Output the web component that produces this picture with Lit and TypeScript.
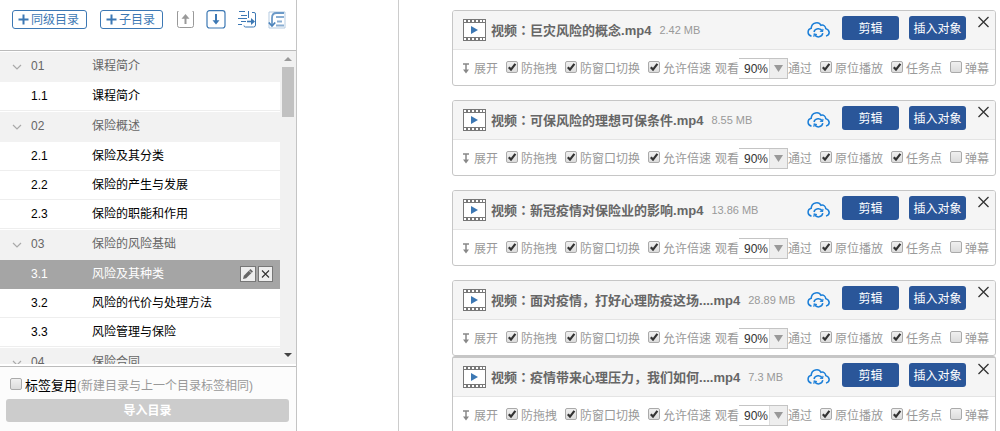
import { LitElement, html, css, svg } from "lit";
import { customElement, property } from "lit/decorators.js";

const base = css`
  *, :host { box-sizing: border-box; }
  :host { font: 12px/18px "Liberation Sans", "Noto Sans CJK SC", sans-serif; }
  button { font: inherit; padding: 0; border: 0; background: none; cursor: pointer; }
  svg { display: block; }
  label { display: flex; align-items: center; white-space: nowrap; }
  input[type="checkbox"] {
    appearance: none; flex: none; width: 12px; height: 12px; margin: 0 3px 4px 0;
    border: 1px solid #aaa; border-radius: 2px;
    background: linear-gradient(#f0f0f0, #dcdcdc);
  }
  input[type="checkbox"]:checked {
    background: url("data:image/svg+xml,%3Csvg xmlns='http://www.w3.org/2000/svg' viewBox='0 0 10 10'%3E%3Cpath d='M1.8 5.2 4 7.6 8.4 1.8' fill='none' stroke='%23333' stroke-width='2.2'/%3E%3C/svg%3E"), linear-gradient(#f0f0f0, #dcdcdc);
  }
`;

interface Entry { no: string; name: string; chapter?: boolean; active?: boolean; }

const entries: Entry[] = [
  { no: "01", name: "课程简介", chapter: true },
  { no: "1.1", name: "课程简介" },
  { no: "02", name: "保险概述", chapter: true },
  { no: "2.1", name: "保险及其分类" },
  { no: "2.2", name: "保险的产生与发展" },
  { no: "2.3", name: "保险的职能和作用" },
  { no: "03", name: "保险的风险基础", chapter: true },
  { no: "3.1", name: "风险及其种类", active: true },
  { no: "3.2", name: "风险的代价与处理方法" },
  { no: "3.3", name: "风险管理与保险" },
  { no: "04", name: "保险合同", chapter: true },
];

const videos = [
  { name: "巨灾风险的概念.mp4", size: "2.42 MB" },
  { name: "可保风险的理想可保条件.mp4", size: "8.55 MB" },
  { name: "新冠疫情对保险业的影响.mp4", size: "13.86 MB" },
  { name: "面对疫情，打好心理防疫这场....mp4", size: "28.89 MB" },
  { name: "疫情带来心理压力，我们如何....mp4", size: "7.3 MB" },
];

const plus = html`<svg width="11" height="11" viewBox="0 0 11 11"><path d="M5.5 0.5v10M0.5 5.5h10" stroke="#3c78b4" stroke-width="2"/></svg>`;

@customElement("course-outline")
export class CourseOutline extends LitElement {
  static styles = [base, css`
    :host { display: flex; flex-direction: column; width: 297px; flex: none; border-right: 1px solid #c4c4c4; background: #fff; }
    .tools { display: flex; align-items: flex-start; gap: 13px; height: 51px; flex: none; padding: 10px 10px 0 12px; border-bottom: 1px solid #bbb; }
    .add { display: flex; align-items: center; gap: 2px; height: 19px; padding: 0 7px 0 5px; border: 1px solid #3c78b4; border-radius: 3px; color: #3c78b4; white-space: nowrap; }
    .icons { display: flex; flex: 1; justify-content: space-between; }
    .body { display: flex; flex: 1; min-height: 0; border-bottom: 2px solid #fff; }
    .list { flex: 1; overflow: hidden; margin: 0; padding: 0; list-style: none; }
    .row { display: grid; grid-template-columns: 19px 61px 1fr auto; align-items: center; height: 29px; padding: 0 7px 0 12px; border-bottom: 1px solid #eee; color: #000; }
    .chapter { height: 31px; padding-bottom: 2px; border-top: 1px solid #fff; border-bottom: 0; background: #f2f2f2; color: #666; }
    .active { background: #a5a5a5; border-color: #a5a5a5; color: #fff; }
    .acts { display: flex; gap: 2px; }
    .acts button { border: 1px solid #777; background: #eee; }
    .bar { display: flex; flex-direction: column; width: 16px; background: #f1f1f1; }
    .thumb { width: 12px; height: 50px; margin: 0 2px; background: #c1c1c1; }
    .space { flex: 1; }
    .foot { flex: none; padding: 10px 7px 9px 6px; border-top: 1px solid #bbb; background: #fcfcfc; }
    .reuse { margin-left: 4px; font-size: 13px; }
    .hint { color: #999; font-size: 12px; }
    .import { display: block; width: 100%; height: 23px; margin-top: 4px; border-radius: 3px; background: #ccc; color: #fff; font-weight: bold; }
  `];

  render() {
    return html`
      <div class="tools">
        <button class="add">${plus}同级目录</button>
        <button class="add">${plus}子目录</button>
        <div class="icons">
          <button aria-label="上移"><svg width="19" height="19" viewBox="0 0 19 19" fill="none"><path d="M2.500 1.500h-1v14a2 2 0 0 0 2 2h12a2 2 0 0 0 2-2v-14h-1" stroke="#999"/><path d="M9.500 14V6" stroke="#999" stroke-width="2"/><path d="M5.500 8.800 9.500 4l4 4.800z" fill="#999"/></svg></button>
          <button aria-label="下移"><svg width="20" height="19" viewBox="0 0 20 19" fill="none"><rect x="1" y=".7" width="18" height="17.300" rx="2.500" stroke="#3c78b4" stroke-width="1.200"/><path d="M10 4v9" stroke="#3c78b4" stroke-width="2"/><path d="M6.500 10.200 10 14.500l3.500-4.300z" fill="#3c78b4"/></svg></button>
          <button aria-label="降级"><svg width="19" height="19" viewBox="0 0 19 19" fill="none" stroke="#3c78b4"><path d="M1 1.500h6M3 5.500h6M0 8.500h9M3 11.500h5M0 14.500h4M10.500 1v7M14 2.500h2a1.500 1.500 0 0 1 1.500 1.500v11a2 2 0 0 1-2 2H7.500a1.500 1.500 0 0 1-1.500-1.500"/><path d="M9 11.500h6" stroke-width="1.600"/><path d="m13 8 4 3.500-4 3.500z" fill="#3c78b4" stroke="none"/></svg></button>
          <button aria-label="排序"><svg width="18" height="18" viewBox="0 0 18 18" fill="none"><path d="M1 1h16v16H1z" stroke="#b5cbe1"/><path d="M16 2H8.500Q4 2 4 7v7" stroke="#6c9ac8" stroke-width="1.800"/><path d="M.8 11.500 4 15l3.200-3.500" stroke="#4a82ba" stroke-width="1.800"/><path d="M8 6h8M9 10.500h5M8 14.500h8" stroke="#8aaed2" stroke-width="1.800"/></svg></button>
        </div>
      </div>
      <div class="body">
        <ul class="list">
          ${entries.map((e) => html`
            <li class="row ${e.chapter ? "chapter" : ""} ${e.active ? "active" : ""}">
              <span>${e.chapter ? html`<svg width="10" height="10" viewBox="0 0 10 10"><path d="m1 4 4 4 4-4" fill="none" stroke="#aaa" stroke-width="1.200"/></svg>` : ""}</span>
              <span>${e.no}</span><span>${e.name}</span>
              ${e.active ? html`<span class="acts">
                <button aria-label="编辑"><svg width="14" height="14" viewBox="0 0 14 14"><path d="m2 12 .8-3.200L9.500 2 12 4.500 5.200 11.200z" fill="#666"/><path d="m8 3.500 2.500 2.500" stroke="#eee" stroke-width=".8"/></svg></button>
                <button aria-label="删除"><svg width="13" height="14" viewBox="0 0 13 14"><path d="m3 3.500 7 7m0-7-7 7" stroke="#333" stroke-width="1.100"/></svg></button>
              </span>` : ""}
            </li>`)}
        </ul>
        <div class="bar">
          <svg width="16" height="16" viewBox="0 0 16 16"><path d="m4 10 4-4 4 4z" fill="#999"/></svg>
          <div class="thumb"></div>
          <div class="space"></div>
          <svg width="16" height="16" viewBox="0 0 16 16"><path d="m4 5 4 4 4-4z" fill="#444"/></svg>
        </div>
      </div>
      <div class="foot">
        <label class="reuse"><input type="checkbox" />标签复用<span class="hint">(新建目录与上一个目录标签相同)</span></label>
        <button class="import">导入目录</button>
      </div>`;
  }
}

@customElement("video-card")
export class VideoCard extends LitElement {
  @property() name = "";
  @property() size = "";

  static styles = [base, css`
    :host { display: block; border: 1px solid #c6c6c6; border-radius: 3px; background: #fff; overflow: hidden; color: #999; }
    .head { display: flex; align-items: center; height: 39px; padding: 0 6px 0 10px; border-bottom: 1px solid #e4e4e4; background: #f5f5f5; white-space: nowrap; }
    .name { margin: 0 8px 0 5px; font-size: 13px; font-weight: bold; color: #666; }
    .mark { font-family: "Noto Sans CJK TC", sans-serif; }
    .size { flex: 1; font-size: 11px; }
    .blue { width: 57px; height: 24px; margin: 0 0 4px 10px; padding-top: 1px; border-radius: 3px; background: #2a5699; color: #fff; }
    .cloud { margin-right: 2px; }
    .close { margin: 0 0 16px 12px; }
    .opts { display: flex; align-items: center; justify-content: space-between; height: 35px; padding: 2px 6px 0 9px; white-space: nowrap; }
    .pair { display: flex; align-items: center; gap: 4px; }
    .open { display: flex; align-items: center; gap: 4px; color: inherit; }
    select {
      appearance: none; font: inherit; width: 49px; height: 21px; padding: 0 0 0 5px; color: #333;
      border: 1px solid #c4c4c4; border-left: 0; border-radius: 0;
      background: url("data:image/svg+xml,%3Csvg xmlns='http://www.w3.org/2000/svg' width='18' height='19'%3E%3Cpath fill='%23eee' d='M0 0h18v19H0z'/%3E%3Cpath d='M.5 0v19' stroke='%23ddd'/%3E%3Cpath d='M5 6h9l-4.500 7z' fill='%23999'/%3E%3C/svg%3E") right top no-repeat #fff;
    }
  `];

  check(text: string, on = true) {
    return html`<label><input type="checkbox" .checked=${on} />${text}</label>`;
  }

  render() {
    return html`
      <div class="head">
        <svg width="23" height="22" viewBox="0 0 23 22"><path d="M0 0h23v22H0z" fill="#777"/><path d="M1 4h21v14H1z" fill="#fff"/>
          ${[1, 5, 9, 13, 17, 20].map((x) => svg`<path d="M${x} 1h2v2h-2zM${x} 19h2v2h-2z" fill="#fff"/>`)}
          <path d="m8 7 7 4-7 4z" fill="#3c78b4"/></svg>
        <span class="name">视频<span class="mark">：</span>${this.name}</span>
        <span class="size">${this.size}</span>
        <button class="cloud" aria-label="上传"><svg width="23" height="18" viewBox="0 0 23 18" fill="none" stroke="#1c7fd8" stroke-width="1.500"><path d="M4.500 15.200C-.2 13.800.2 8.300 4.200 7.300 4.500 1 12 .2 14 4.300c2.500-.7 4.500.8 4.800 3.300 4.300 1.300 4.600 6.200.2 7.500"/><path d="M7 11c.8-4 6.500-4.500 8.400-1M15.800 12.200c-.8 4.300-6.300 5-8.300 1.200"/><path d="m16 7.800-.4 2.700-2.700-.4M6.800 15.800l.4-2.800 2.700.6" stroke-width="1.100"/></svg></button>
        <button class="blue">剪辑</button>
        <button class="blue">插入对象</button>
        <button class="close" aria-label="关闭"><svg width="11" height="12" viewBox="0 0 11 12"><path d="m.5 1 10 10m0-10-10 10" stroke="#333" stroke-width="1.300"/></svg></button>
      </div>
      <div class="opts">
        <button class="open"><svg width="8" height="11" viewBox="0 0 8 11"><path d="M1 1h6M4 1v7" stroke="#888" stroke-width="1.500" fill="none"/><path d="M1 6.500h6L4 10.500z" fill="#888"/></svg>展开</button>
        ${this.check("防拖拽")}
        ${this.check("防窗口切换")}
        <div class="pair">
          ${this.check("允许倍速")}
          <label>观看<select><option>90%</option></select>通过</label>
        </div>
        ${this.check("原位播放")}
        ${this.check("任务点")}
        ${this.check("弹幕", false)}
      </div>`;
  }
}

@customElement("app-root")
export class AppRoot extends LitElement {
  static styles = css`
    * { box-sizing: border-box; }
    :host { display: flex; height: 100vh; overflow: hidden; background: #fff; }
    .gutter { width: 102px; flex: none; border-right: 1px solid #ccc; }
    .cards { flex: 1; min-width: 0; padding: 10px 4px 0 53px; }
    video-card { margin-bottom: 14px; }
    video-card:nth-child(4) { margin-bottom: 0; }
    video-card:nth-child(5) { border-top-width: 2px; }
  `;

  render() {
    return html`
      <course-outline></course-outline>
      <div class="gutter"></div>
      <main class="cards">
        ${videos.map((v) => html`<video-card .name=${v.name} .size=${v.size}></video-card>`)}
      </main>`;
  }
}
